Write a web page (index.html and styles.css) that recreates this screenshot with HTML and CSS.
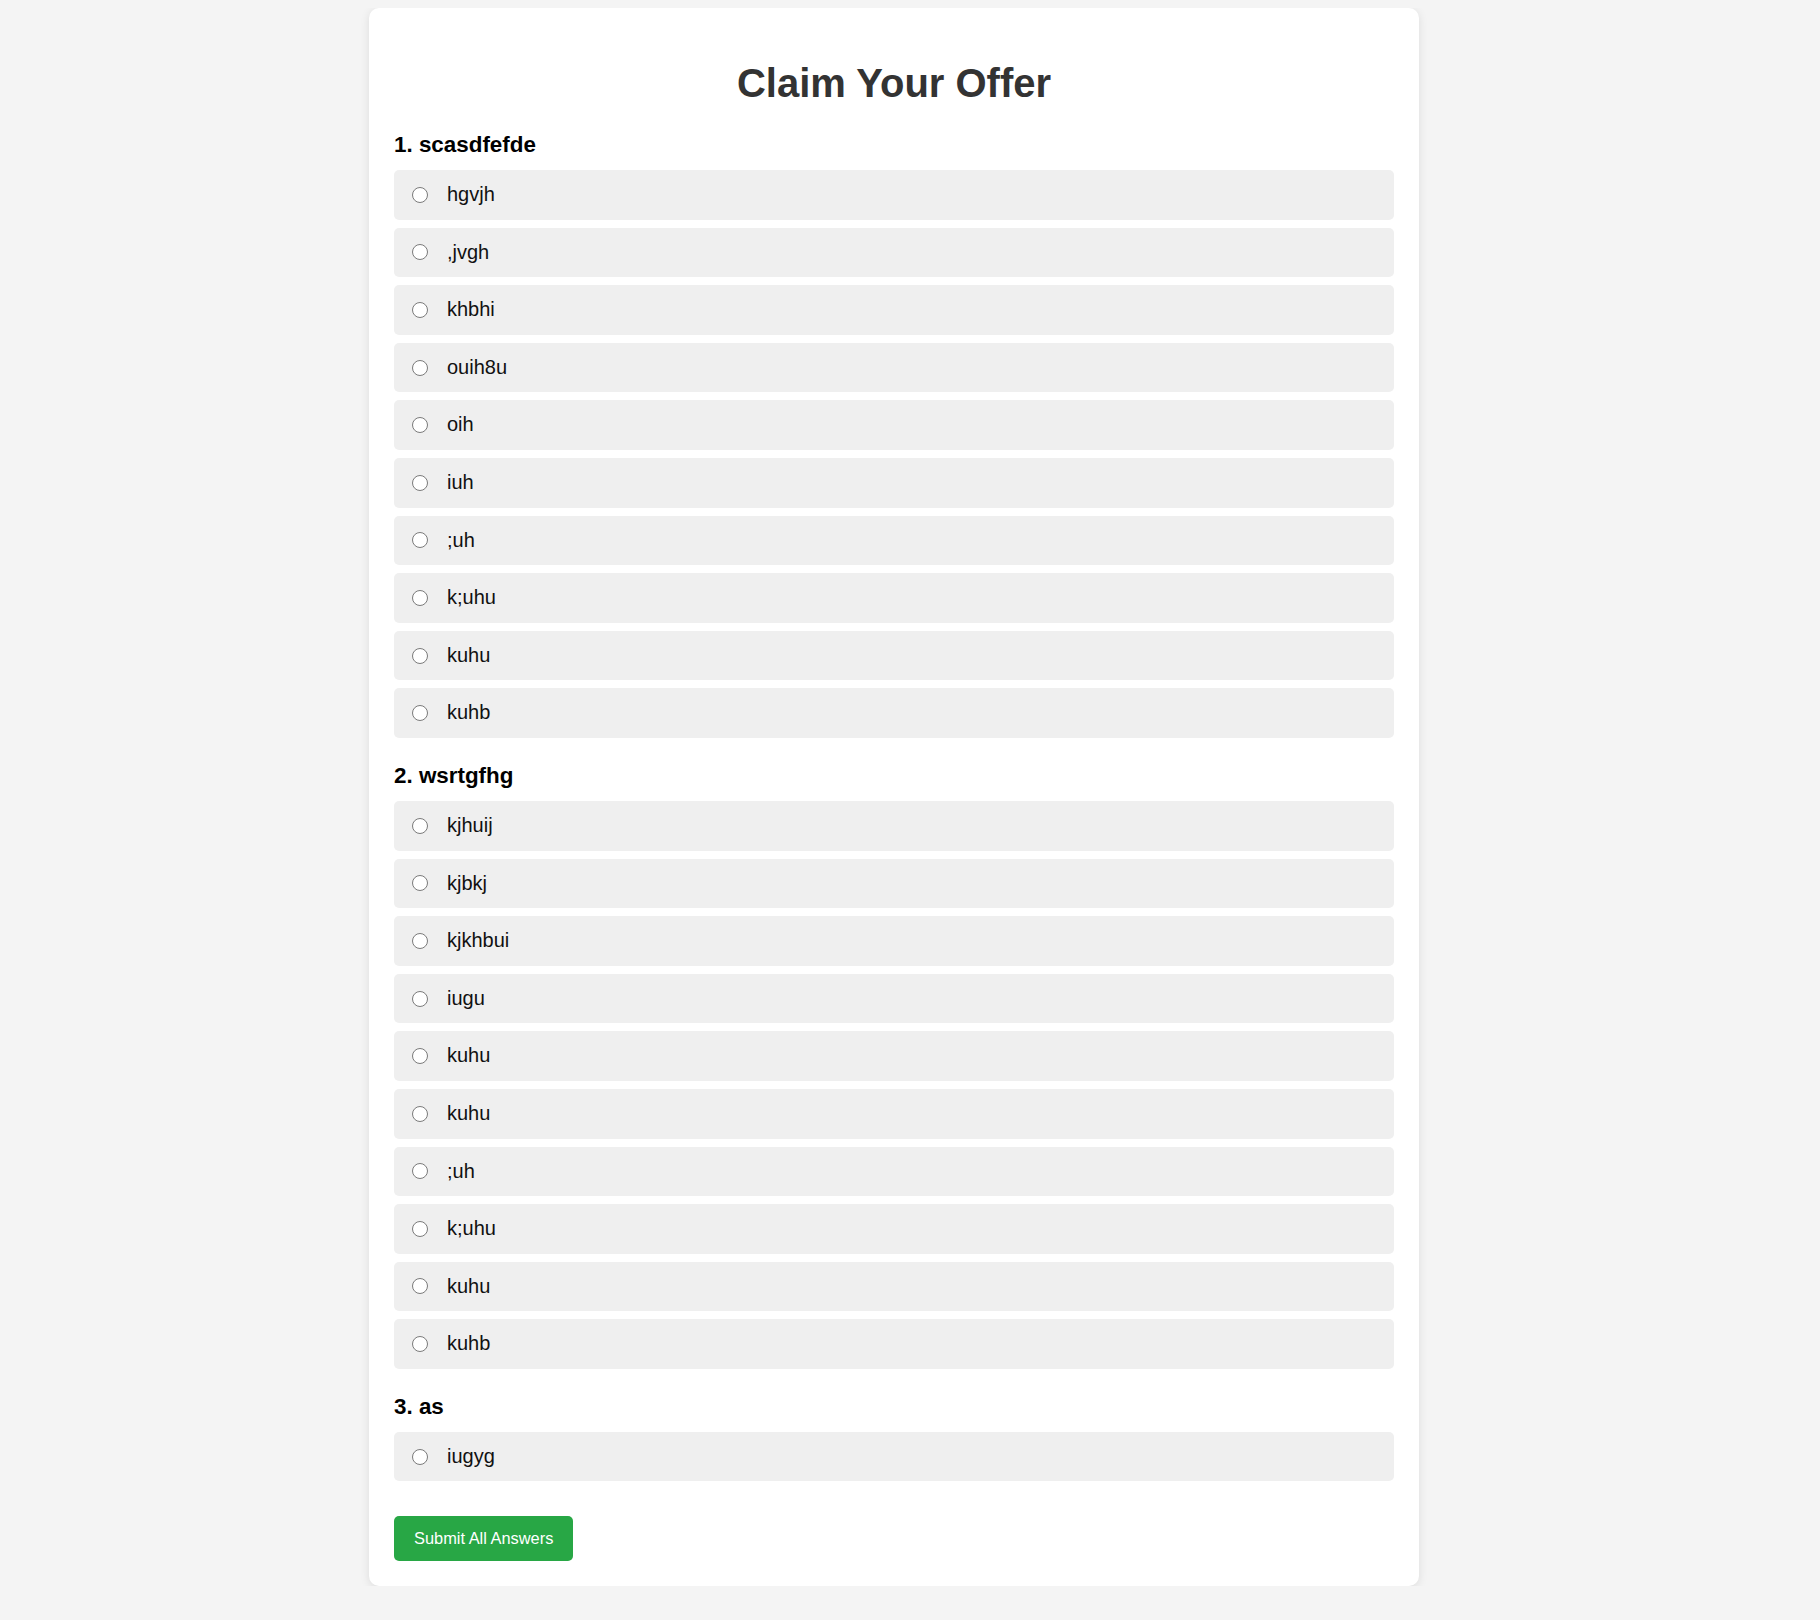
FILE: index.html
```html
<!DOCTYPE html>
<html lang="en">
<head>
<meta charset="utf-8">
<title>Claim Your Offer</title>
<link rel="stylesheet" href="styles.css">
</head>
<body>
<div class="page">
  <form class="card">
    <h1 class="title">Claim Your Offer</h1>

    <div class="question">
      <h3 class="q-title">1. scasdfefde</h3>
      <label class="option"><input type="radio" name="q1"><span>hgvjh</span></label>
      <label class="option"><input type="radio" name="q1"><span>,jvgh</span></label>
      <label class="option"><input type="radio" name="q1"><span>khbhi</span></label>
      <label class="option"><input type="radio" name="q1"><span>ouih8u</span></label>
      <label class="option"><input type="radio" name="q1"><span>oih</span></label>
      <label class="option"><input type="radio" name="q1"><span>iuh</span></label>
      <label class="option"><input type="radio" name="q1"><span>;uh</span></label>
      <label class="option"><input type="radio" name="q1"><span>k;uhu</span></label>
      <label class="option"><input type="radio" name="q1"><span>kuhu</span></label>
      <label class="option"><input type="radio" name="q1"><span>kuhb</span></label>
    </div>

    <div class="question">
      <h3 class="q-title">2. wsrtgfhg</h3>
      <label class="option"><input type="radio" name="q2"><span>kjhuij</span></label>
      <label class="option"><input type="radio" name="q2"><span>kjbkj</span></label>
      <label class="option"><input type="radio" name="q2"><span>kjkhbui</span></label>
      <label class="option"><input type="radio" name="q2"><span>iugu</span></label>
      <label class="option"><input type="radio" name="q2"><span>kuhu</span></label>
      <label class="option"><input type="radio" name="q2"><span>kuhu</span></label>
      <label class="option"><input type="radio" name="q2"><span>;uh</span></label>
      <label class="option"><input type="radio" name="q2"><span>k;uhu</span></label>
      <label class="option"><input type="radio" name="q2"><span>kuhu</span></label>
      <label class="option"><input type="radio" name="q2"><span>kuhb</span></label>
    </div>

    <div class="question">
      <h3 class="q-title">3. as</h3>
      <label class="option"><input type="radio" name="q3"><span>iugyg</span></label>
    </div>

    <button type="button" class="submit">Submit All Answers</button>
  </form>
</div>
</body>
</html>
```

FILE: styles.css
```css
html, body {
  background: #f4f4f4;
}

body {
  margin: 8px;
  font-family: "Liberation Sans", Arial, Helvetica, sans-serif;
  color: #111;
}

.page {
  padding-right: 32px;
}

.card {
  max-width: 1000px;
  margin: 0 auto;
  padding: 25px;
  background: #ffffff;
  border-radius: 10px;
  box-shadow: 0 2px 10px rgba(0, 0, 0, 0.1);
}

.title {
  margin: 27px 0 26px;
  font-size: 40px;
  line-height: 46px;
  font-weight: bold;
  text-align: center;
  color: #333333;
}

.question {
  margin-bottom: 25px;
}

.q-title {
  margin: 0 0 12px;
  font-size: 22.4px;
  line-height: 26px;
  font-weight: bold;
  color: #000;
}

.option {
  display: flex;
  align-items: center;
  gap: 19px;
  margin-bottom: 8px;
  padding: 13px 18px;
  line-height: 23.6px;
  font-size: 20px;
  background: #efefef;
  border-radius: 5px;
  color: #111;
  cursor: pointer;
}

.option input {
  appearance: none;
  -webkit-appearance: none;
  flex: none;
  width: 16px;
  height: 16px;
  margin: 0;
  border: 1px solid #7a7a7a;
  border-radius: 50%;
  background: #ffffff;
}

.submit {
  display: block;
  margin-top: 35px;
  padding: 13px 20px;
  font-family: "Liberation Sans", Arial, Helvetica, sans-serif;
  font-size: 16.4px;
  line-height: 19px;
  color: #ffffff;
  background: #28a745;
  border: none;
  border-radius: 5px;
  cursor: pointer;
}
```
